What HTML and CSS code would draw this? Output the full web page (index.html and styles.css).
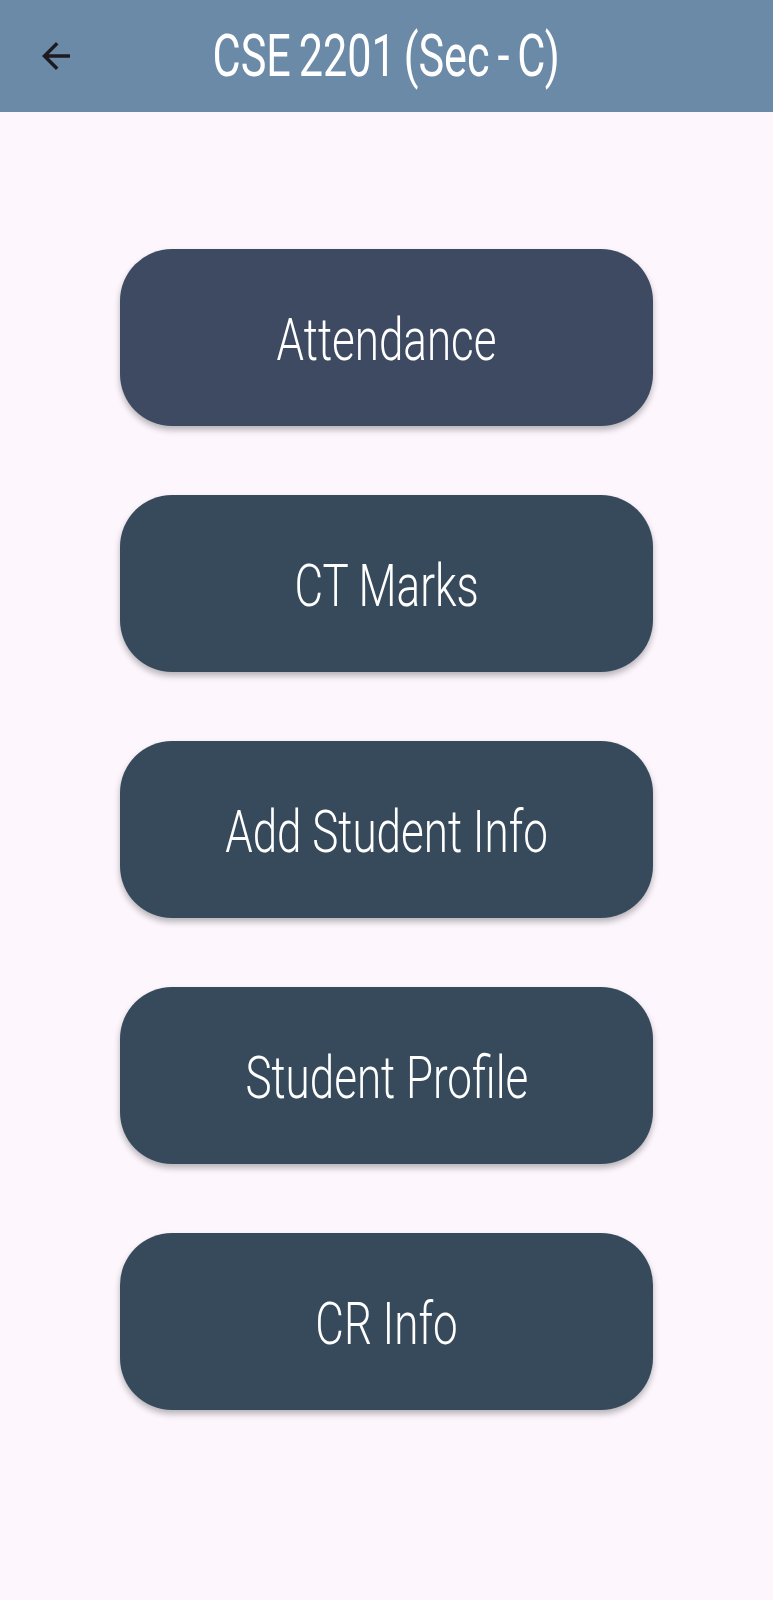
FILE: index.html
```html
<!DOCTYPE html>
<html>
<head>
<meta charset="utf-8">
<link rel="stylesheet" href="styles.css">
</head>
<body>
<header class="appbar">
  <div class="appbar-left">
    <svg class="back" viewBox="0 0 24 24" width="42" height="42"><path d="M20 11H7.83l5.59-5.59L12 4l-8 8 8 8 1.41-1.41L7.83 13H20v-2z" fill="#1d1b20"/></svg>
  </div>
  <h1 class="title"><span class="cond">CSE 2201 (Sec - C)</span></h1>
  <div class="appbar-right"></div>
</header>
<main class="menu">
  <button class="btn btn-first"><span class="cond-light">Attendance</span></button>
  <button class="btn"><span class="cond-light">CT Marks</span></button>
  <button class="btn"><span class="cond-light">Add Student Info</span></button>
  <button class="btn"><span class="cond-light">Student Profile</span></button>
  <button class="btn"><span class="cond-light">CR Info</span></button>
</main>
</body>
</html>
```
FILE: styles.css
```css
html, body {
  margin: 0;
  padding: 0;
}
body {
  background: #fdf7fd;
  font-family: Roboto, "Liberation Sans", sans-serif;
  width: 773px;
  min-height: 1600px;
}
.appbar {
  height: 112px;
  background: #6a8aa8;
  display: grid;
  grid-template-columns: 1fr auto 1fr;
  align-items: center;
}
.appbar-left {
  display: flex;
  align-items: center;
  padding-left: 35px;
}
.back {
  display: block;
}
.title {
  margin: 0;
  color: #ffffff;
  font-weight: 400;
  font-size: 60px;
  line-height: 1;
  white-space: nowrap;
  text-align: center;
}
.cond {
  display: inline-block;
  transform: scaleX(0.72);
  word-spacing: -4px;
  position: relative;
  top: 0px;
}
.menu {
  display: flex;
  flex-direction: column;
  align-items: center;
  gap: 69px;
  padding-top: 137px;
}
.btn {
  width: 533px;
  height: 177px;
  border: none;
  border-radius: 52px;
  background: #374a5c;
  color: #ffffff;
  box-shadow: 0 4px 6px rgba(0, 0, 0, 0.28);
  font-family: Roboto, "Liberation Sans", sans-serif;
  font-weight: 300;
  font-size: 59px;
  line-height: 1;
  display: flex;
  align-items: center;
  justify-content: center;
  padding: 0;
  white-space: nowrap;
}
.btn-first {
  background: #3e4a62;
}
.cond-light {
  display: inline-block;
  transform: scaleX(0.745);
  position: relative;
  top: 2px;
}
```
